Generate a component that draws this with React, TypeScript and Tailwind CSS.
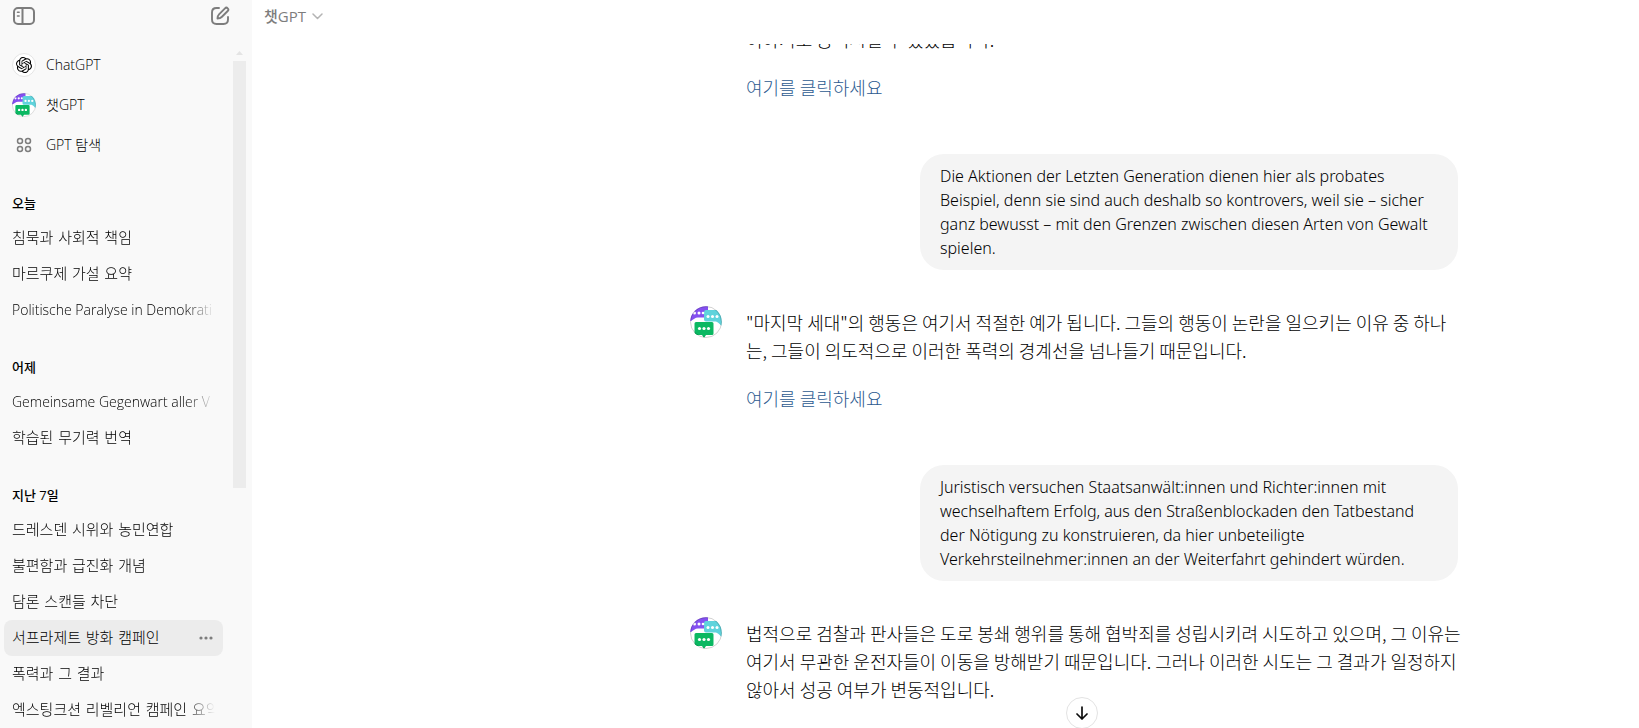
import React from 'react';
import clsx from 'clsx';
import { SiOpenai } from 'react-icons/si';

type Chat = { title: string; latin?: boolean; active?: boolean };
type Group = { label: string; chats: Chat[] };

const groups: Group[] = [
  {
    label: '오늘',
    chats: [
      { title: '침묵과 사회적 책임' },
      { title: '마르쿠제 가설 요약' },
      { title: 'Politische Paralyse in Demokrati', latin: true },
    ],
  },
  {
    label: '어제',
    chats: [
      { title: 'Gemeinsame Gegenwart aller V', latin: true },
      { title: '학습된 무기력 번역' },
    ],
  },
  {
    label: '지난 7일',
    chats: [
      { title: '드레스덴 시위와 농민연합' },
      { title: '불편함과 급진화 개념' },
      { title: '담론 스캔들 차단' },
      { title: '서프라제트 방화 캠페인', active: true },
      { title: '폭력과 그 결과' },
      { title: '엑스팅크션 리벨리언 캠페인 요약' },
    ],
  },
];

function SidebarIcon() {
  return (
    <svg width="22" height="18" viewBox="0 0 22 18" fill="none" stroke="currentColor" strokeWidth="2" strokeLinecap="round">
      <rect x="1" y="1" width="20" height="16" rx="4" />
      <path d="M9.5 1v16" />
      <path d="M4.5 5.2h1.6M4.5 9h1.6" strokeWidth="1.6" />
    </svg>
  );
}

function EditIcon() {
  return (
    <svg width="20" height="20" viewBox="0 0 20 20" fill="none" stroke="currentColor" strokeWidth="1.9" strokeLinecap="round" strokeLinejoin="round">
      <path d="M9 2H6.5C3.5 2 2 3.5 2 6.5v7C2 16.5 3.5 18 6.5 18h7c3 0 4.5-1.5 4.5-4.5V11" />
      <path d="M9 8.3 15 2.3a1.9 1.9 0 0 1 2.7 2.7l-6 6c-.9.9-2.4 1.5-4.2 1.5 0-1.8.6-3.3 1.5-4.2Z" />
    </svg>
  );
}

function ExploreIcon() {
  return (
    <svg width="16" height="16" viewBox="0 0 16 16" fill="none" stroke="#7d7d7d" strokeWidth="1.5">
      <circle cx="4" cy="4" r="2.5" />
      <circle cx="12" cy="4" r="2.5" />
      <circle cx="4" cy="12" r="2.5" />
      <circle cx="12" cy="12" r="2.5" />
    </svg>
  );
}

function BotAvatar({ className }: { className: string }) {
  const id = React.useId();
  return (
    <svg className={className} viewBox="0 0 32 32" aria-hidden="true">
      <clipPath id={id}>
        <circle cx="16" cy="16" r="15.8" />
      </clipPath>
      <g clipPath={`url(#${id})`}>
        <rect width="32" height="32" fill="#fff" />
        <path d="M0 0h18v11.5H8C5 11.5 3.5 13.5 1 15H0Z" fill="#8450f0" />
        <path d="M16 4h14a2 2 0 0 1 2 2v14c-2-1-3-3.5-6-4.5H16a2 2 0 0 1-2-2V6a2 2 0 0 1 2-2Z" fill="#5fd3dc" />
        <path d="M6 16h16a1.5 1.5 0 0 1 1.5 1.5V27.5A1.5 1.5 0 0 1 22 29h-6L14 32l-2-3H6a1.5 1.5 0 0 1-1.5-1.5V17.5A1.5 1.5 0 0 1 6 16Z" fill="#0bb862" />
        <g fill="#fff">
          <circle cx="4.5" cy="7" r="1.5" />
          <circle cx="9" cy="7" r="1.5" />
          <circle cx="13" cy="7" r="1.3" />
          <circle cx="18" cy="10.5" r="1.5" />
          <circle cx="22.5" cy="10.5" r="1.5" />
          <circle cx="27" cy="10.5" r="1.5" />
          <circle cx="9.5" cy="22.5" r="1.6" />
          <circle cx="14" cy="22.5" r="1.6" />
          <circle cx="18.5" cy="22.5" r="1.6" />
        </g>
      </g>
      <circle cx="16" cy="16" r="15.5" fill="none" stroke="#000" strokeOpacity=".18" />
    </svg>
  );
}

function NavItem({ icon, children }: { icon: React.ReactNode; children: React.ReactNode }) {
  return (
    <a href="#" className="flex h-10 items-center gap-[10px] px-2 pt-[2px] text-sm">
      <span className="flex size-6 items-center justify-center">{icon}</span>
      {children}
    </a>
  );
}

function ChatRow({ title, latin, active }: Chat) {
  return (
    <li className={clsx('flex h-9 items-center rounded-lg px-2', active && 'bg-[#ececec]')}>
      <a
        href="#"
        className={clsx(
          'min-w-0 flex-1 overflow-hidden whitespace-nowrap',
          latin ? 'text-sm/9' : 'font-[DejaVu_Sans,Noto_Sans_CJK_KR,sans-serif] text-[15px]/9',
          !active && 'mask-r-from-[85%] mask-r-to-100%',
        )}
      >
        {title}
      </a>
      {active && (
        <button type="button" aria-label="옵션" className="flex h-9 w-[18px] items-center justify-center text-[#7d7d7d]">
          <svg width="14" height="4" viewBox="0 0 14 4" fill="currentColor">
            <circle cx="2" cy="2" r="1.6" />
            <circle cx="7" cy="2" r="1.6" />
            <circle cx="12" cy="2" r="1.6" />
          </svg>
        </button>
      )}
    </li>
  );
}

function Sidebar() {
  return (
    <aside className="flex w-[252px] shrink-0 flex-col bg-[#f9f9f9]">
      <div className="flex h-8 shrink-0 items-center justify-between pr-[22px] pl-[13px] text-[#7d7d7d]">
        <button type="button" aria-label="사이드바 닫기"><SidebarIcon /></button>
        <button type="button" aria-label="새 채팅"><EditIcon /></button>
      </div>
      <div className="flex min-h-0 flex-1">
        <nav className="min-w-0 flex-1 overflow-hidden pt-3 pr-[10px] pl-1">
          <NavItem
            icon={
              <span className="flex size-6 items-center justify-center rounded-full border border-[#e5e5e5] bg-white">
                <SiOpenai size={16} />
              </span>
            }
          >
            ChatGPT
          </NavItem>
          <NavItem icon={<BotAvatar className="size-6" />}>챗GPT</NavItem>
          <NavItem icon={<ExploreIcon />}>GPT 탐색</NavItem>
          {groups.map((group) => (
            <section key={group.label} className="pt-[31px]">
              <h3 className="mb-[9px] px-2 text-[13px] leading-4 font-medium">{group.label}</h3>
              <ol>
                {group.chats.map((chat) => (
                  <ChatRow key={chat.title} {...chat} />
                ))}
              </ol>
            </section>
          ))}
        </nav>
        {/* Scrollbar */}
        <div className="mr-[6px] flex w-[13px] flex-col items-center pt-[19px]">
          <svg width="7" height="4" viewBox="0 0 7 4" fill="#e4e4e4"><path d="M3.5 0 7 4H0Z" /></svg>
          <div className="mt-[6px] h-[63%] w-full bg-[#ececec]" />
        </div>
      </div>
    </aside>
  );
}

function UserMessage({ lines }: { lines: string[] }) {
  return (
    <div className="ml-auto w-[538px] rounded-3xl bg-[#f4f4f4] px-5 py-[10px] font-[Noto_Sans,sans-serif] text-base leading-6 whitespace-pre">
      {lines.join('\n')}
    </div>
  );
}

function BotMessage({ lines, link, avatar = true }: { lines: string[]; link?: boolean; avatar?: boolean }) {
  return (
    <div className="flex gap-6">
      <div className="w-8 shrink-0">{avatar && <BotAvatar className="size-8" />}</div>
      <div className="pt-[2px] pb-px font-[Noto_Sans_CJK_KR,sans-serif] text-lg leading-7">
        <p className="whitespace-pre">{lines.join('\n')}</p>
        {link && (
          <p className="mt-5">
            <a href="#" className="text-[#2c5a90]">여기를 클릭하세요</a>
          </p>
        )}
      </div>
    </div>
  );
}

export default function App() {
  return (
    <div className="flex h-screen overflow-hidden bg-white font-[Open_Sans,Noto_Sans_CJK_KR,sans-serif] font-light text-black">
      <Sidebar />
      <main className="relative flex min-w-0 flex-1 flex-col">
        <header className="flex h-11 shrink-0 items-start px-3">
          <button type="button" className="flex h-8 items-center gap-[6px] text-[15px] font-medium text-[#7d7d7d]">
            챗GPT
            <svg width="11" height="7" viewBox="0 0 11 7" fill="none" stroke="#b4b4b4" strokeWidth="1.5" strokeLinecap="round" strokeLinejoin="round">
              <path d="m1 1 4.5 4.5L10 1" />
            </svg>
          </button>
        </header>
        <div className="flex min-h-0 flex-1 flex-col justify-end overflow-hidden pr-[181px] pb-6">
          <div className="ml-auto w-full max-w-3xl">
            <BotMessage avatar={false} lines={['이야기로 공격시킬 수 있었습니다.']} link />
            <div className="mt-13">
              <UserMessage
                lines={[
                  'Die Aktionen der Letzten Generation dienen hier als probates',
                  'Beispiel, denn sie sind auch deshalb so kontrovers, weil sie – sicher',
                  'ganz bewusst – mit den Grenzen zwischen diesen Arten von Gewalt',
                  'spielen.',
                ]}
              />
            </div>
            <div className="mt-9">
              <BotMessage
                lines={[
                  '"마지막 세대"의 행동은 여기서 적절한 예가 됩니다. 그들의 행동이 논란을 일으키는 이유 중 하나',
                  '는, 그들이 의도적으로 이러한 폭력의 경계선을 넘나들기 때문입니다.',
                ]}
                link
              />
            </div>
            <div className="mt-13">
              <UserMessage
                lines={[
                  'Juristisch versuchen Staatsanwält:innen und Richter:innen mit',
                  'wechselhaftem Erfolg, aus den Straßenblockaden den Tatbestand',
                  'der Nötigung zu konstruieren, da hier unbeteiligte',
                  'Verkehrsteilnehmer:innen an der Weiterfahrt gehindert würden.',
                ]}
              />
            </div>
            <div className="mt-9">
              <BotMessage
                lines={[
                  '법적으로 검찰과 판사들은 도로 봉쇄 행위를 통해 협박죄를 성립시키려 시도하고 있으며, 그 이유는',
                  '여기서 무관한 운전자들이 이동을 방해받기 때문입니다. 그러나 이러한 시도는 그 결과가 일정하지',
                  '않아서 성공 여부가 변동적입니다.',
                ]}
              />
            </div>
          </div>
        </div>
        <button
          type="button"
          aria-label="맨 아래로"
          className="absolute right-[541px] -bottom-px flex size-8 items-center justify-center rounded-full border border-[#e3e3e3] bg-white"
        >
          <svg width="14" height="14" viewBox="0 0 14 14" fill="none" stroke="#0d0d0d" strokeWidth="1.7" strokeLinecap="round" strokeLinejoin="round">
            <path d="M7 1v12M2 8l5 5 5-5" />
          </svg>
        </button>
      </main>
    </div>
  );
}
